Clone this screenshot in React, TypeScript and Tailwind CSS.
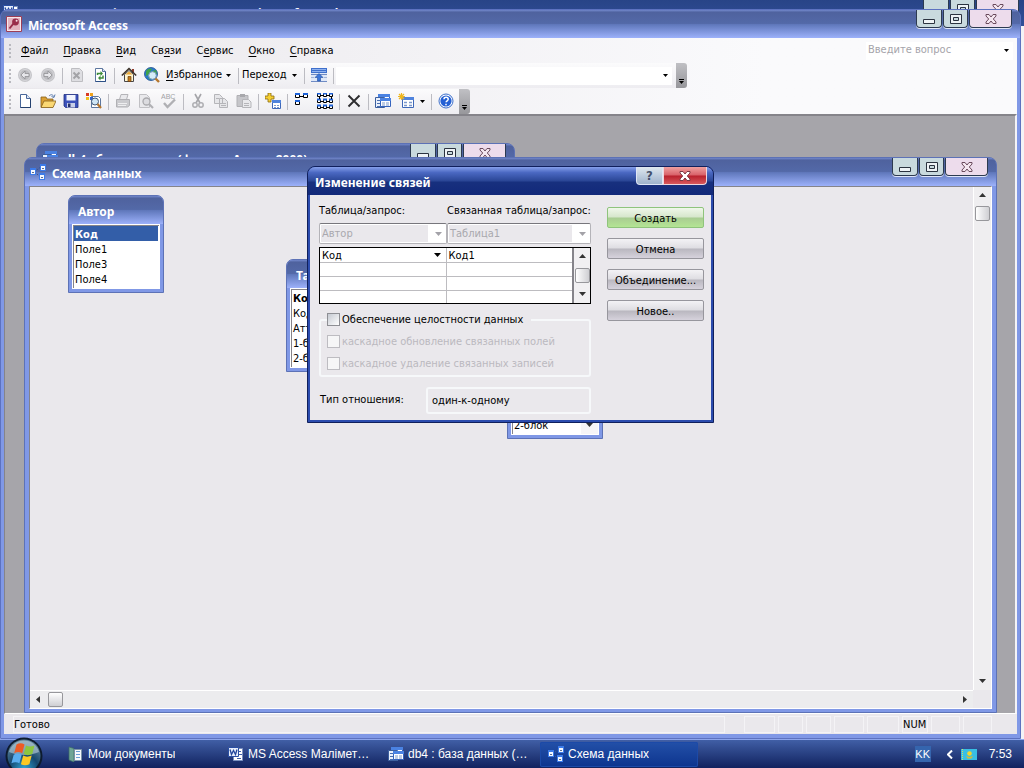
import { type ReactNode } from "react";

const UI = "font-['DejaVu_Sans_Condensed','DejaVu_Sans',sans-serif]";
const CAPTION = "font-['Noto_Sans','Open_Sans',sans-serif] font-bold";
const TITLE_BG =
  "bg-[linear-gradient(180deg,#7288cc_0%,#4f629e_8%,#5369a8_48%,#6078bc_52%,#9cb1fa_100%)]";

const MENU = [
  ["", "Ф", "айл"],
  ["", "П", "равка"],
  ["", "В", "ид"],
  ["Св", "я", "зи"],
  ["С", "е", "рвис"],
  ["", "О", "кно"],
  ["", "С", "правка"],
];

function Svg({ children, size = 16 }: { children: ReactNode; size?: number }) {
  return (
    <svg width={size} height={size} viewBox="0 0 16 16" className="shrink-0" aria-hidden="true">
      {children}
    </svg>
  );
}

function Arrow({ dir = "down", color = "#000" }: { dir?: "down" | "up" | "left" | "right"; color?: string }) {
  const d = {
    down: "M1 2h7L4.500 6z",
    up: "M1 6h7L4.500 2z",
    left: "M6 1v7L2 4.500z",
    right: "M3 1v7L7 4.500z",
  }[dir];
  return (
    <svg width="9" height="9" viewBox="0 0 9 9" className="shrink-0" aria-hidden="true">
      <path d={d} fill={color} />
    </svg>
  );
}

function SmallArrow() {
  return (
    <svg width="5" height="3" viewBox="0 0 5 3" className="shrink-0" aria-hidden="true">
      <path d="M0 0h5L2.500 3z" />
    </svg>
  );
}

/* ---------- icons ---------- */

function NavIcon({ flip = false }: { flip?: boolean }) {
  return (
    <Svg>
      <circle cx="8" cy="8" r="7" fill="#c4c4c8" />
      <circle cx="8" cy="8" r="5.500" fill="#bcbcc0" stroke="#d6d6da" />
      <path
        d={flip ? "M4 6.500h4V4l4 4-4 4V9.500H4z" : "M12 6.500H8V4L4 8l4 4V9.500h4z"}
        fill="#e6e6ea"
        stroke="#909094"
        strokeWidth=".8"
      />
    </Svg>
  );
}

function PageIcon() {
  return (
    <Svg>
      <path d="M3.500 1.500h6l4 4v9h-10z" fill="#fff" stroke="#49679a" />
      <path d="M13.500 5.500v9h-10" fill="none" stroke="#24406e" />
      <path d="M9.500 1.500v4h4" fill="#dce6f6" stroke="#49679a" />
    </Svg>
  );
}

function StopIcon() {
  return (
    <Svg>
      <path d="M2.500 1.500h8l3 3v10h-11z" fill="#dedee2" stroke="#bdbdc1" />
      <path d="M4.500 5.500l6 6m0-6l-6 6" stroke="#a3a3a7" strokeWidth="2" />
    </Svg>
  );
}

function RefreshIcon() {
  return (
    <Svg>
      <path d="M3.500 1.500h7l3 3v10h-10z" fill="#fff" stroke="#5d779f" />
      <path d="M13.500 4.500v10h-10" fill="none" stroke="#2c4f86" />
      <path d="M10.500 1.500v3h3" fill="#dce6f6" stroke="#5d779f" />
      <path d="M5.500 8V6.500H9M11 8.500V11H7.500" fill="none" stroke="#3d8b3a" strokeWidth="1.500" />
      <path d="M8.500 4l2.500 2.500L8.500 9zM8.500 8.500L6 11l2.500 2.500z" fill="#3d8b3a" />
    </Svg>
  );
}

function HomeIcon() {
  return (
    <Svg>
      <path d="M11 2h2v4h-2z" fill="#8f3a2a" />
      <path d="M3.500 7.500L8 3.500l4.500 4v7h-9z" fill="#fff5cf" stroke="#47464a" />
      <path d="M.8 8.500L8 1.500l7.200 7" fill="none" stroke="#3a3128" strokeWidth="1.600" />
      <path d="M4.500 7.500L8 4.500l3.500 3z" fill="#eba83a" />
      <path d="M7 9.500h3v5H7z" fill="#c47a1e" stroke="#6b3f0d" strokeWidth=".7" />
    </Svg>
  );
}

function GlobeSearchIcon() {
  return (
    <Svg>
      <circle cx="7" cy="7" r="6.500" fill="#2a7acb" stroke="#1f4f8e" strokeWidth=".8" />
      <path d="M2 4c2-3 5-3 6-2L6 5 4 8 2 9zM8 4l4-1 1 4-3 1zM4 10l3 1-1 2z" fill="#3fa24a" />
      <circle cx="8.500" cy="8.500" r="3.800" fill="#d5edf8" stroke="#7d9fb8" />
      <path d="M11.500 11.500l3.500 3.500" stroke="#b6762c" strokeWidth="2.400" />
    </Svg>
  );
}

function ToggleBarIcon() {
  return (
    <Svg>
      <path d="M0 1h16v14H0z" fill="#dfe8f8" />
      <path d="M0 1h16v5H0z" fill="#3f70cc" />
      <path d="M1 2.500h14M1 4.500h14" stroke="#8fb2ee" />
      <path d="M0 7.500h16M0 14.500h16" stroke="#6f8bc4" />
      <path d="M8 6.500l4 4H9.500V14h-3v-3.500H4z" fill="#3d77da" stroke="#234d9e" strokeWidth=".6" />
      <path d="M0 10.500h3M13 10.500h3" stroke="#a2b4d8" />
    </Svg>
  );
}

function OpenIcon() {
  return (
    <Svg>
      <path d="M1 4h5l1 2h6v8H1z" fill="#dba033" stroke="#87601a" strokeWidth=".8" />
      <path d="M4 8h12l-3 6.500H1z" fill="#fbd873" stroke="#87601a" strokeWidth=".8" />
      <path d="M9 3c2-2 4-1.500 4.500.5M15 1.500l-1 3-2.500-1" fill="none" stroke="#5a7bad" />
    </Svg>
  );
}

function SaveIcon() {
  return (
    <Svg>
      <path d="M1 1.500h14v13H2.500L1 13z" fill="#3b51ba" stroke="#1f2f80" strokeWidth=".8" />
      <path d="M3.500 2h9v5.500h-9z" fill="#f1f4fd" />
      <path d="M4 10h8v4.500H4z" fill="#c8cfe8" />
      <path d="M5 10.500h2.500v3.500H5z" fill="#26306b" />
    </Svg>
  );
}

function FileSearchIcon() {
  return (
    <Svg>
      <path d="M5.500 3.500h7l2 2v9h-9z" fill="#fff" stroke="#5d779f" />
      <path d="M0 0h3v3H0z" fill="#d83a24" />
      <path d="M4 0h3v3H4z" fill="#f0a21c" />
      <path d="M0 4h3v3H0z" fill="#f0c01c" />
      <path d="M4 4h3v3H4z" fill="#3060c8" />
      <circle cx="9" cy="8.500" r="3.500" fill="#cfe6f5" stroke="#445a78" />
      <path d="M11.500 11l3.500 4" stroke="#b6762c" strokeWidth="2.200" />
    </Svg>
  );
}

function PrintIcon() {
  return (
    <Svg>
      <path d="M4.500 6.500l1.500-5h7l-1.500 5" fill="#e9e9ec" stroke="#b4b4b8" />
      <path d="M1.500 6.500h13v6l-2 1.500h-11z" fill="#cacace" stroke="#b0b0b4" />
      <path d="M3 10.500h9M3 12.500h8" stroke="#eeeef0" />
    </Svg>
  );
}

function PreviewIcon() {
  return (
    <Svg>
      <path d="M1.500 1.500h7l3 3v10h-10z" fill="#e9e9ec" stroke="#c0c0c4" />
      <circle cx="8.500" cy="8.500" r="3.500" fill="#dcdce0" stroke="#a9a9ad" strokeWidth="1.300" />
      <path d="M11 11l4 4" stroke="#b0b0b4" strokeWidth="2.200" />
    </Svg>
  );
}

function SpellIcon() {
  return (
    <Svg>
      <text x="0" y="6" fontSize="7" fontFamily="Liberation Sans" fill="#a2a2a6">
        ABC
      </text>
      <path d="M3 10l3.500 4L14 6.500" fill="none" stroke="#b0b0b4" strokeWidth="2.400" />
    </Svg>
  );
}

function CutIcon() {
  return (
    <Svg>
      <path d="M5 1l5 9M11 1l-5 9" stroke="#a5a5a9" strokeWidth="1.600" />
      <circle cx="5" cy="12" r="2.200" fill="none" stroke="#aeaeb2" strokeWidth="1.500" />
      <circle cx="11" cy="12" r="2.200" fill="none" stroke="#aeaeb2" strokeWidth="1.500" />
    </Svg>
  );
}

function CopyIcon() {
  return (
    <Svg>
      <path d="M1.500 1.500h5l3 3v6h-8zM6.500 5.500h5l3 3v6h-8z" fill="#e6e6e9" stroke="#b5b5b9" />
      <path d="M3 5.500h3M8 10.500h5M8 12.500h5" stroke="#b5b5b9" />
    </Svg>
  );
}

function PasteIcon() {
  return (
    <Svg>
      <path d="M1 2.500h11v11H1z" fill="#c6c6ca" stroke="#b0b0b4" />
      <path d="M4 1h5v3H4z" fill="#a8a8ac" />
      <path d="M6.500 6.500h6l2.500 2.500v5.500H6.500z" fill="#e9e9ec" stroke="#b5b5b9" />
      <path d="M8 10.500h5M8 12.500h5" stroke="#b5b5b9" />
    </Svg>
  );
}

function AddTableIcon() {
  return (
    <Svg>
      <path d="M3 0h3v3h3v3H6v3H3V6H0V3h3z" fill="#f5cf32" stroke="#8c6a10" strokeWidth=".8" />
      <path d="M7.500 7.500h8v8h-8z" fill="#fff" stroke="#3f68b8" />
      <path d="M7 7h9v3H7z" fill="#4f83dd" />
      <path d="M9 12.500h2M12 12.500h2M9 14.500h2M12 14.500h2" stroke="#7b98cc" />
    </Svg>
  );
}

function DirectIcon() {
  return (
    <Svg>
      <path d="M1.500.500h4v4h-4zM9.500.500h4v4h-4zM1.500 7.500h4v4h-4z" fill="#fff" stroke="#000" />
      <path d="M1 1h5M9 1h5M1 8h5" stroke="#1e62d8" strokeWidth="2" />
      <path d="M6 3.500h3" stroke="#000" />
    </Svg>
  );
}

function AllIcon() {
  return (
    <Svg>
      {[0, 6, 12].map((y) =>
        [0, 6, 12].map((x) => (
          <g key={x + "-" + y}>
            <path d={`M${x + 0.5} ${y + 0.5}h3v3h-3z`} fill="#fff" stroke="#000" />
            <path d={`M${x} ${y + 0.5}h4`} stroke="#1e62d8" strokeWidth="2" />
          </g>
        ))
      )}
      <path d="M4 2.500h2M10 2.500h2M4 8.500h2M10 8.500h2M4 14.500h2M10 14.500h2M2.500 4v2M14.500 4v2" stroke="#000" />
    </Svg>
  );
}

function DeleteIcon() {
  return (
    <Svg>
      <path d="M2.500 2.500l11 11M13.500 2.500l-11 11" stroke="#2e2e30" strokeWidth="1.900" />
    </Svg>
  );
}

function DbWindowIcon() {
  return (
    <Svg>
      <path d="M3.500 1.500h11v8h-11z" fill="#fff" stroke="#3563bd" />
      <path d="M3 1h12v3H3z" fill="#4a82e2" />
      <path d="M.5 4.500h9v10h-9z" fill="#e9f0fc" stroke="#3c5f9e" />
      <path d="M2 7.500h3M2 10.500h3M2 13.500h8" stroke="#4a6eaf" />
      <path d="M5.500 5.500h10v8h-10z" fill="#fff" stroke="#3563bd" />
      <path d="M5 5h11v3H5z" fill="#4a82e2" />
      <path d="M7 10h3M11 10h3M7 12h3M11 12h3" stroke="#7b98cc" />
    </Svg>
  );
}

function NewObjectIcon() {
  return (
    <Svg>
      <path d="M4.500 4.500h11v10h-11z" fill="#fff" stroke="#3f68b8" />
      <path d="M4 4h12v3H4z" fill="#4f83dd" />
      <path d="M6 9.500h3M11 9.500h3M6 12.500h3M11 12.500h3" stroke="#7b98cc" strokeWidth="1.500" />
      <path d="M3.500 0v7M0 3.500h7M1 1l5 5M6 1L1 6" stroke="#efb61e" strokeWidth="1.200" />
    </Svg>
  );
}

function HelpIcon() {
  return (
    <Svg>
      <circle cx="8" cy="8" r="7" fill="#fff" stroke="#3d6fca" />
      <circle cx="8" cy="8" r="5.600" fill="#2460d4" />
      <path
        d="M6 6.300c0-2.600 4.200-2.600 4.200 0 0 1.500-2.100 1.500-2.100 3M8 10.700v1.600"
        fill="none"
        stroke="#fff"
        strokeWidth="1.500"
      />
    </Svg>
  );
}

function AccessIcon() {
  return (
    <Svg>
      <path d="M.5.500h15v15H.5z" fill="#f8e8ec" stroke="#9c3e56" />
      <path d="M2 2h12v12H2z" fill="#e3b4c0" />
      <circle cx="9.500" cy="6" r="3.400" fill="#9a2c4a" />
      <circle cx="10.600" cy="4.800" r="1" fill="#f5dfe5" />
      <path d="M7.500 7.500L3.500 12.500" stroke="#9a2c4a" strokeWidth="2" />
    </Svg>
  );
}

function SchemaIcon() {
  return (
    <Svg>
      <path d="M5 7.500l5-4M5 8.500l5 4" stroke="#33549a" strokeDasharray="1.500 1" />
      <path d="M0 4h6v7H0zM10 0h6v7h-6zM9 9h6v7H9z" fill="#3d7be8" />
      <path d="M1 6h4v4H1zM11 2h4v4h-4zM10 11h4v4h-4z" fill="#f4f8ff" />
      <path d="M2 8.500h2M12 4.500h2M11 13.500h2" stroke="#5c6f92" />
    </Svg>
  );
}

function WordIcon() {
  return (
    <Svg>
      <path d="M5.500 2.500h9v12h-9z" fill="#fff" stroke="#7a90c0" />
      <path d="M9 5.500h4M11 8.500h3M9 12.500h4" stroke="#3f5fa8" />
      <path d="M.5 1.500h10v9H.5z" fill="#e6edfb" stroke="#2a4fa3" />
      <path d="M2 3.500l1.500 5 2-4 2 4 1.500-5" fill="none" stroke="#23479c" strokeWidth="1.300" />
    </Svg>
  );
}

function DocsIcon() {
  return (
    <Svg>
      <path d="M1 1l5 1.500V16L1 14z" fill="#6fa596" stroke="#3d6e63" strokeWidth=".7" />
      <path d="M6.500 3.500h7v11h-7z" fill="#f5f8fb" stroke="#7c93a8" />
      <path d="M8 5.500h4M8 8.500h4M8 11.500h4" stroke="#6b9fd6" />
    </Svg>
  );
}

function StartOrb() {
  return (
    <svg width="38" height="38" viewBox="0 0 38 38" aria-hidden="true">
      <defs>
        <radialGradient id="orb" cx="50%" cy="90%" r="80%">
          <stop offset="0" stopColor="#2fa6d8" />
          <stop offset=".55" stopColor="#16486f" />
          <stop offset="1" stopColor="#5b7f96" />
        </radialGradient>
      </defs>
      <circle cx="19" cy="19" r="18.500" fill="#0d1b2e" />
      <circle cx="19" cy="19" r="16.500" fill="url(#orb)" />
      <path d="M4 15a15.500 15.500 0 0 1 30 0c-9 4-21 4-30 0z" fill="#c8dbe4" opacity=".55" />
      <path d="M11.500 7.500c3-1.800 5.500-1.500 8 0l-2.300 8.700c-2.500-1.500-5-1.700-8 0z" fill="#ee5a24" />
      <path d="M21 8.400c2.500 1.500 5.500 1.500 8.500 0l-2.300 8.700c-3 1.500-6 1.300-8.500 0z" fill="#8cc63f" />
      <path d="M8.700 17.700c3-1.700 5.500-1.500 8 0l-2.300 8.600c-2.500-1.500-5-1.500-8 0z" fill="#5aaef0" />
      <path d="M18.200 18.600c2.500 1.500 5.500 1.300 8.500 0l-2.300 8.600c-3 1.500-6 1.300-8.500 0z" fill="#fbc824" />
    </svg>
  );
}

/* ---------- window parts ---------- */

function CloseGlyph({ fill = "#f4e6f0", stroke = "#6a4a5c" }: { fill?: string; stroke?: string }) {
  return (
    <svg width="12" height="10" viewBox="0 0 12 10" aria-hidden="true">
      <path d="M1 .5h3l2 2.500 2-2.500h3v1.500L8.300 5 11 8v1.500H8L6 7 4 9.500H1V8l2.700-3L1 2z" fill={fill} stroke={stroke} />
    </svg>
  );
}

function CaptionButtons({ restore = false }: { restore?: boolean }) {
  const base =
    "h-[18px] flex items-center justify-center rounded-b-[4px] border border-t-0 border-[#2c3a50] shadow-[0_1px_0_#dfe6fa]";
  return (
    <div className="flex shrink-0 self-start gap-px">
      <button aria-label="Свернуть" className={`${base} w-[26px] bg-[#c9dade]`}>
        <svg width="12" height="10" viewBox="0 0 12 10" aria-hidden="true">
          <path d="M.5 5.500h11v4H.5z" fill="#eef3f6" stroke="#2b3340" />
        </svg>
      </button>
      <button aria-label="Развернуть" className={`${base} w-[25px] bg-[#c9dade]`}>
        <svg width="12" height="10" viewBox="0 0 12 10" aria-hidden="true">
          {restore && <path d="M3.500.500h8v6" fill="none" stroke="#2b3340" />}
          <path d="M.5.500h11v9H.5z" fill="#eef3f6" stroke="#2b3340" />
          <path d="M3.500 3.500h5v3h-5z" fill="#c9dade" stroke="#2b3340" />
        </svg>
      </button>
      <button aria-label="Закрыть" className={`${base} w-[43px] bg-[#eddcec]`}>
        <CloseGlyph />
      </button>
    </div>
  );
}

function TitleBar({ icon, title, restore }: { icon: ReactNode; title: string; restore?: boolean }) {
  return (
    <div className={`flex h-7 shrink-0 items-center gap-[6px] rounded-t-[6px] pl-[5px] pr-2 ${TITLE_BG}`}>
      {icon}
      <span className={`flex-1 truncate pt-[3px] text-[12px] leading-4 text-white ${CAPTION}`}>{title}</span>
      <CaptionButtons restore={restore} />
    </div>
  );
}

function Grip() {
  return (
    <span className="mr-px flex w-[3px] shrink-0 flex-col gap-[2px]">
      <i className="size-[2px] bg-[#b9b9bf]" />
      <i className="size-[2px] bg-[#b9b9bf]" />
      <i className="size-[2px] bg-[#b9b9bf]" />
      <i className="size-[2px] bg-[#b9b9bf]" />
    </span>
  );
}

function Sep() {
  return (
    <span className="flex w-[6px] shrink-0 justify-center">
      <i className="h-4 w-px bg-[#bcbcc2]" />
    </span>
  );
}

function Tool({ label, children }: { label: string; children: ReactNode }) {
  return (
    <button aria-label={label} className="flex h-full w-[23px] shrink-0 items-start justify-center pt-1">
      {children}
    </button>
  );
}

function ToolbarEnd() {
  return (
    <button
      aria-label="Параметры панели инструментов"
      className="flex h-full w-[11px] shrink-0 flex-col items-center justify-end gap-px rounded-r-[3px] bg-linear-to-b from-[#c0c0c4] to-[#97979b] pb-1"
    >
      <i className="h-px w-[5px] bg-black" />
      <SmallArrow />
    </button>
  );
}

function TableBox({
  className,
  title,
  rows,
  selected = false,
  scroll = false,
}: {
  className: string;
  title: string;
  rows: string[];
  selected?: boolean;
  scroll?: boolean;
}) {
  return (
    <div className={`absolute w-24 rounded-t-[7px] border border-[#5d72b6] bg-[#8098e6] px-[3px] pb-[3px] ${className}`}>
      <div className={`-mx-[3px] h-7 rounded-t-[6px] pl-[9px] pt-2 text-[12px] leading-4 text-white ${TITLE_BG} ${CAPTION}`}>
        {title}
      </div>
      <div className="flex border border-white bg-white">
        <ul className="flex-1 border-l border-t border-[#85848a] pb-[2px] pr-px text-[11px] leading-[15px]">
          {rows.map((row, i) => (
            <li
              key={row}
              className={`h-[15px] overflow-hidden whitespace-nowrap pl-px pt-[2px] leading-[14px] ${
                i === 0 ? "font-bold" : ""
              } ${i === 0 && selected ? "bg-[#335ea8] text-white" : ""}`}
            >
              {row}
            </li>
          ))}
        </ul>
        {scroll && (
          <div className="flex w-[17px] items-end justify-center bg-[#f6f5f7] pb-1">
            <Arrow color="#333" />
          </div>
        )}
      </div>
    </div>
  );
}

function SchemaWindow() {
  return (
    <section className="absolute bottom-0 left-[19px] right-[18px] top-[41px] flex flex-col rounded-t-[8px] border border-[#5d72b6] bg-[#8098e6]">
      <TitleBar icon={<SchemaIcon />} title="Схема данных" />
      <div className="mx-1 mb-[3px] flex min-h-0 flex-1 flex-col border border-b-white border-l-[#85848a] border-r-white border-t-[#85848a] bg-[#eae8ec]">
        <div className="flex min-h-0 flex-1">
          <div className="relative flex-1 overflow-hidden">
            <TableBox className="left-[38px] top-2" title="Автор" rows={["Код", "Поле1", "Поле3", "Поле4"]} selected />
            <TableBox
              className="left-[256px] top-[72px]"
              title="Таблица1"
              rows={["Код1", "Код", "Аттестат", "1-блок", "2-блок"]}
            />
            <TableBox
              className="left-[477px] top-[139px]"
              title="Таблица2"
              rows={["Код2", "Код", "Имя", "1-блок", "2-блок"]}
              scroll
            />
          </div>
          <div className="flex w-[18px] shrink-0 flex-col items-center justify-between border-l border-white bg-[#efeef0] py-1">
            <span className="flex flex-col items-center gap-[6px]">
              <Arrow dir="up" color="#333" />
              <i className="h-[15px] w-[15px] rounded-[2px] border border-[#97979b] bg-linear-to-r from-white to-[#cfcfd3]" />
            </span>
            <Arrow color="#333" />
          </div>
        </div>
        <div className="mr-[18px] flex h-[18px] shrink-0 items-center justify-between border-t border-white bg-[#ececee] px-1">
          <span className="flex items-center gap-[5px]">
            <Arrow dir="left" color="#333" />
            <i className="h-[15px] w-[15px] rounded-[2px] border border-[#97979b] bg-linear-to-b from-white to-[#cfcfd3]" />
          </span>
          <Arrow dir="right" color="#333" />
        </div>
      </div>
    </section>
  );
}

function Combo({ label, value, className }: { label: string; value: string; className: string }) {
  return (
    <label className={`relative block ${className}`}>
      <span className="block h-5 whitespace-nowrap leading-[15px]">{label}</span>
      <select
        disabled
        className="block h-[21px] w-full appearance-none rounded-[2px] border border-[#b4b3b8] border-t-[#77767c] bg-[linear-gradient(#eae8ec,#eae8ec)] bg-no-repeat bg-[length:calc(100%-19px)_17px] bg-[position:1px_1px] bg-white pl-[2px] pt-[2px] text-[#a9a8ae] opacity-100"
      >
        <option>{value}</option>
      </select>
      <span className="pointer-events-none absolute bottom-[5px] right-1">
        <Arrow color="#a3a2a8" />
      </span>
    </label>
  );
}

function DialogButton({ children, primary = false }: { children: ReactNode; primary?: boolean }) {
  return (
    <button
      className={`h-[21px] w-full rounded-[2px] border pt-[3px] leading-4 ${
        primary
          ? "border-[#8fc47c] bg-[linear-gradient(180deg,#f0f7ea_0%,#d6e6cb_48%,#a9cc92_52%,#b4e594_100%)]"
          : "border-[#97969d] bg-[linear-gradient(180deg,#f3f2f5_0%,#dedde2_48%,#b9b7bf_52%,#d6d2dc_100%)]"
      }`}
    >
      {children}
    </button>
  );
}

function Check({ label, disabled = false }: { label: string; disabled?: boolean }) {
  return (
    <label className={`flex items-center gap-[2px] leading-[15px] ${disabled ? "text-[#bbb9bf]" : ""}`}>
      <input
        type="checkbox"
        disabled={disabled}
        className={`size-[13px] shrink-0 appearance-none border ${
          disabled ? "border-[#bdbcc1] bg-[#f6f6f7]" : "border-[#8e8f94] bg-linear-to-br from-[#c6cad2] to-white"
        }`}
      />
      <span className="whitespace-nowrap">{label}</span>
    </label>
  );
}

function RelationsDialog() {
  const cell = "h-[14px] border-b border-[#bdbcc0] p-0 pl-[2px] text-left align-middle font-normal leading-[13px]";
  return (
    <section
      role="dialog"
      aria-label="Изменение связей"
      className="absolute left-[307px] top-[166px] w-[407px] rounded-t-[8px] border border-[#10205c] bg-[#2c4cae] px-[2px] pb-[2px]"
    >
      <div className="-mx-[2px] flex h-7 items-center rounded-t-[7px] bg-[linear-gradient(180deg,#86a0ea_0%,#4a68c2_20%,#2c4898_48%,#17307e_55%,#12297a_100%)] pl-[7px] pr-[6px]">
        <span className={`flex-1 pt-1 text-[12px] leading-4 text-white ${CAPTION}`}>Изменение связей</span>
        <div className="flex self-start">
          <button
            aria-label="Справка"
            className="flex h-[18px] w-[27px] items-center justify-center rounded-bl-[4px] border border-t-0 border-[#dfe6f6] bg-linear-to-b from-[#dfe8ef] to-[#9fb3cc] text-[13px] font-bold leading-4 text-[#44506a]"
          >
            ?
          </button>
          <button
            aria-label="Закрыть"
            className="flex h-[18px] w-[44px] items-center justify-center rounded-br-[4px] border border-t-0 border-[#f0d6dc] bg-[linear-gradient(180deg,#f0a0a0_0%,#d86068_48%,#b8202c_52%,#d8585c_100%)]"
          >
            <CloseGlyph fill="#fff" stroke="#7c3a44" />
          </button>
        </div>
      </div>
      <div className="flex gap-4 bg-[#eae8ec] pb-[6px] pl-[9px] pr-[7px] pt-2">
        <div className="min-w-0 flex-1">
          <div className="flex">
            <Combo label="Таблица/запрос:" value="Автор" className="w-[128px]" />
            <Combo label="Связанная таблица/запрос:" value="Таблица1" className="flex-1" />
          </div>
          <div className="mt-[3px] flex h-[57px] overflow-hidden border border-black bg-white">
            <table className="h-[56px] flex-1 table-fixed border-collapse">
              <tbody>
                <tr>
                  <td className={`${cell} w-[126px] border-r`}>
                    <div className="flex items-center justify-between pr-1 pt-px">
                      Код
                      <Arrow />
                    </div>
                  </td>
                  <td className={`${cell} pt-px`}>Код1</td>
                </tr>
                {[1, 2, 3].map((n) => (
                  <tr key={n}>
                    <td className={`${cell} border-r`} />
                    <td className={cell} />
                  </tr>
                ))}
              </tbody>
            </table>
            <div className="flex w-[18px] flex-col items-center justify-between border-l-2 border-[#85848a] bg-[#f1f0f2] py-1">
              <Arrow dir="up" color="#333" />
              <i className="h-[15px] w-[15px] shrink-0 rounded-[2px] border border-[#97979b] bg-linear-to-r from-white to-[#cfcfd3]" />
              <Arrow color="#333" />
            </div>
          </div>
          <fieldset className="mt-2 min-w-0 rounded-[3px] border-2 border-[#f6f8fa] pb-1 pl-[6px]">
            <legend className="pr-2">
              <Check label="Обеспечение целостности данных" />
            </legend>
            <div className="flex flex-col gap-[7px] pt-[7px]">
              <Check label="каскадное обновление связанных полей" disabled />
              <Check label="каскадное удаление связанных записей" disabled />
            </div>
          </fieldset>
          <label className="mt-[10px] flex items-center">
            <span className="w-[107px] pl-px">Тип отношения:</span>
            <input
              readOnly
              value="один-к-одному"
              className="h-[27px] min-w-0 flex-1 rounded-[3px] border-2 border-[#f6f8fa] bg-transparent pl-1 outline-none"
            />
          </label>
        </div>
        <div className="mt-1 flex w-[97px] flex-col gap-[10px]">
          <DialogButton primary>Создать</DialogButton>
          <DialogButton>Отмена</DialogButton>
          <DialogButton>Объединение...</DialogButton>
          <DialogButton>Новое..</DialogButton>
        </div>
      </div>
    </section>
  );
}

function Toolbars() {
  return (
    <div className="bg-linear-to-r from-[#eae8ec] to-[#fafafc] to-75%">
      <nav className="flex h-[25px] items-center gap-4 pl-[5px] pr-1 text-[11px]">
        <div className="flex flex-1 items-center">
          <Grip />
          <div className="flex gap-[15px] pl-2">
            {MENU.map(([before, key, after]) => (
              <button key={before + key + after} className="leading-4">
                {before}
                <u className="underline-offset-2">{key}</u>
                {after}
              </button>
            ))}
          </div>
        </div>
        <div className="flex h-[18px] w-[147px] items-center justify-between bg-white pl-[2px] pr-1">
          <input
            aria-label="Введите вопрос"
            placeholder="Введите вопрос"
            className="w-[120px] bg-transparent outline-none placeholder:text-[#a5a4aa]"
          />
          <SmallArrow />
        </div>
      </nav>
      <div className="flex h-[25px] w-[683px] items-center rounded-r-[3px] bg-linear-to-b from-[#fbfbfc] to-[#eeedf1] pl-[5px] text-[11px]">
        <Grip />
        <Tool label="Назад"><NavIcon /></Tool>
        <Tool label="Вперед"><NavIcon flip /></Tool>
        <Sep />
        <Tool label="Остановить"><StopIcon /></Tool>
        <Tool label="Обновить"><RefreshIcon /></Tool>
        <Sep />
        <Tool label="Начальная страница"><HomeIcon /></Tool>
        <Tool label="Найти в Интернете"><GlobeSearchIcon /></Tool>
        <button className="flex w-[72px] items-center justify-between pl-[3px] pr-1">
          <span><u className="underline-offset-2">И</u>збранное</span>
          <SmallArrow />
        </button>
        <Sep />
        <button className="flex w-[60px] items-center justify-between pl-px pr-1">
          <span>Пере<u className="underline-offset-2">х</u>од</span>
          <SmallArrow />
        </button>
        <Sep />
        <Tool label="Показать только веб-панель"><ToggleBarIcon /></Tool>
        <Sep />
        <div className="mr-1 flex h-[18px] flex-1 items-center bg-white pr-1">
          <input aria-label="Адрес" className="min-w-0 flex-1 bg-transparent outline-none" />
          <SmallArrow />
        </div>
        <ToolbarEnd />
      </div>
      <div className="mt-px flex h-[25px] w-[466px] items-center rounded-r-[3px] bg-linear-to-b from-[#fbfbfc] to-[#eeedf1] pl-[5px]">
        <Grip />
        <Tool label="Создать"><PageIcon /></Tool>
        <Tool label="Открыть"><OpenIcon /></Tool>
        <Tool label="Сохранить"><SaveIcon /></Tool>
        <Tool label="Найти файл"><FileSearchIcon /></Tool>
        <Sep />
        <Tool label="Печать"><PrintIcon /></Tool>
        <Tool label="Предварительный просмотр"><PreviewIcon /></Tool>
        <Tool label="Орфография"><SpellIcon /></Tool>
        <Sep />
        <Tool label="Вырезать"><CutIcon /></Tool>
        <Tool label="Копировать"><CopyIcon /></Tool>
        <Tool label="Вставить"><PasteIcon /></Tool>
        <Sep />
        <Tool label="Добавить таблицу"><AddTableIcon /></Tool>
        <Sep />
        <Tool label="Прямые связи"><DirectIcon /></Tool>
        <Tool label="Все связи"><AllIcon /></Tool>
        <Sep />
        <Tool label="Удалить"><DeleteIcon /></Tool>
        <Sep />
        <Tool label="Окно базы данных"><DbWindowIcon /></Tool>
        <Tool label="Новый объект"><NewObjectIcon /></Tool>
        <button aria-label="Выбор объекта" className="flex w-[11px] shrink-0 justify-center">
          <SmallArrow />
        </button>
        <Sep />
        <Tool label="Справка"><HelpIcon /></Tool>
        <span className="flex-1" />
        <ToolbarEnd />
      </div>
    </div>
  );
}

function StatusBar() {
  const box = "h-[17px] border border-[#f4f3f6]";
  return (
    <footer className="flex h-5 shrink-0 items-center gap-[3px] bg-[#eae8ec] px-[9px] text-[11px]">
      <span className={`${box} flex-1 leading-4`}>Готово</span>
      <span className={`${box} ml-4 w-[31px]`} />
      <span className={`${box} w-[25px]`} />
      <span className={`${box} w-[25px]`} />
      <span className={`${box} w-[30px]`} />
      <span className={`${box} w-8`} />
      <span className={`${box} w-[26px] leading-4`}>NUM</span>
      <span className={`${box} w-[29px]`} />
      <span className={`${box} mr-4 w-[29px]`} />
    </footer>
  );
}

function AccessWindow() {
  return (
    <section className="absolute bottom-0 left-0 right-[3px] top-[9px] flex flex-col rounded-t-[8px] border border-[#5d72c0] bg-[#8098e6]">
      <TitleBar icon={<AccessIcon />} title="Microsoft Access" />
      <div className="mx-[3px] mb-1 flex min-h-0 flex-1 flex-col">
        <Toolbars />
        <main className="relative min-h-0 flex-1 overflow-hidden border-b border-l border-r-2 border-t-2 border-b-white border-l-[#85848a] border-r-[#f4f3f6] border-t-[#85848a] bg-[#a6a5aa]">
          <div className="absolute left-[31px] top-[27px] w-[479px] rounded-t-[8px] border border-[#5d72b6] bg-[#8098e6]">
            <TitleBar icon={<DbWindowIcon />} title="db4 : база данных (формат Access 2000)" />
          </div>
          <SchemaWindow />
        </main>
        <StatusBar />
      </div>
    </section>
  );
}

function Task({ icon, label, active = false }: { icon: ReactNode; label: string; active?: boolean }) {
  return (
    <button
      className={`flex h-[25px] min-w-0 max-w-[158px] flex-1 items-center gap-1 rounded-[2px] px-2 ${
        active ? "bg-linear-to-b from-[#2350a8] to-[#0d348e] shadow-[inset_0_0_0_1px_#1c4aa8]" : ""
      }`}
    >
      {icon}
      <span className="truncate">{label}</span>
    </button>
  );
}

function Taskbar() {
  return (
    <div className="flex h-[29px] shrink-0 items-center border-t border-[#8ea6ec] bg-linear-to-b from-[#415fa6] to-[#12225f] pr-3 font-['Liberation_Sans',Arial,sans-serif] text-[12px] text-white">
      <button aria-label="Пуск" className="relative ml-[5px] mr-[17px] mt-1 h-[38px] w-[38px] shrink-0">
        <StartOrb />
      </button>
      <div className="flex min-w-0 flex-1 gap-[2px]">
        <Task icon={<DocsIcon />} label="Мои документы" />
        <Task icon={<WordIcon />} label="MS Access Маліметтер қоры" />
        <Task icon={<DbWindowIcon />} label="db4 : база данных (формат Access 2000)" />
        <Task icon={<SchemaIcon />} label="Схема данных" active />
      </div>
      <span className="mr-4 h-4 w-4 bg-[#3565ae] text-center text-[11px] leading-4">KK</span>
      <svg width="6" height="9" viewBox="0 0 6 9" className="mr-2" aria-hidden="true">
        <path d="M5 .5L1 4.500l4 4" fill="none" stroke="#fff" strokeWidth="2" />
      </svg>
      <svg width="16" height="11" viewBox="0 0 16 11" className="mr-3" aria-hidden="true">
        <path d="M0 0h16v11H0z" fill="#38bfe4" />
        <path d="M1.500 0v11" stroke="#e0dc50" strokeDasharray="1 1" />
        <circle cx="8.500" cy="4.500" r="2.300" fill="#f4d42c" />
        <path d="M5 7l3.500 1L12 7l-1.500 2.500h-4z" fill="#d9bd2c" />
      </svg>
      <span>7:53</span>
    </div>
  );
}

export default function App() {
  return (
    <div className={`flex h-screen flex-col overflow-hidden text-[11px] text-black ${UI}`}>
      <div className="relative min-h-0 flex-1 overflow-hidden bg-[#f4f3f6]">
        <div className="flex h-[26px] items-start gap-1 overflow-hidden bg-linear-to-b from-[#284487] to-[#324f98] pl-[3px] pr-[5px]">
          <span className="pt-1"><WordIcon /></span>
          <span className={`flex-1 pt-[6px] text-[12px] leading-4 text-white ${CAPTION}`}>
            MS Access Маліметтер қорын құру - Microsoft Word
          </span>
          <CaptionButtons restore />
        </div>
        <AccessWindow />
        <RelationsDialog />
      </div>
      <Taskbar />
    </div>
  );
}
